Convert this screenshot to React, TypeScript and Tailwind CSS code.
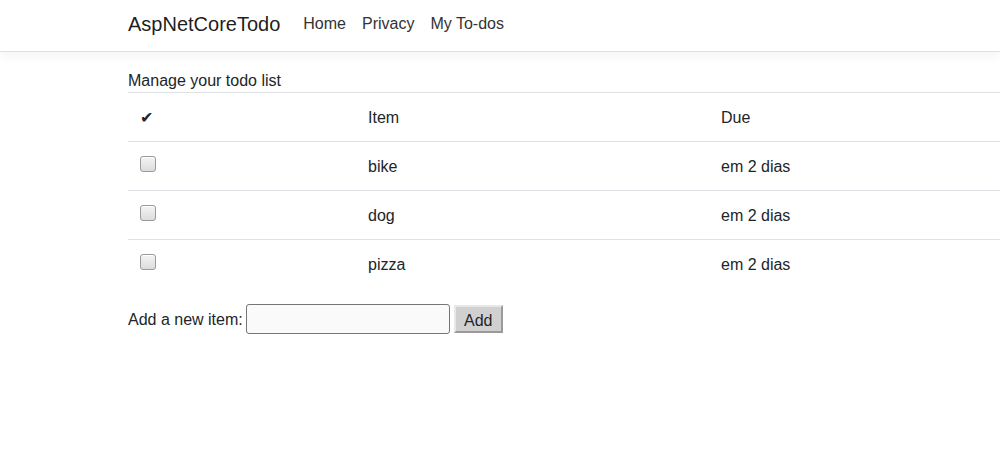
const todos = ["bike", "dog", "pizza"];

const Checkbox = () => (
  <span className="block w-4 h-4 rounded-[3px] border border-[#9a9a9a] bg-gradient-to-b from-[#f4f4f4] to-[#dcdcdc] shadow-[inset_0_1px_0_#fff]"></span>
);

export default function App() {
  return (
    <div className="min-h-[476px] bg-white text-[#212529] overflow-hidden" style={{ fontFamily: '"Liberation Sans", Arial, sans-serif' }}>
      <header className="h-[52px] border-b border-[#dee2e6] bg-white shadow-[0_4px_12px_rgba(0,0,0,0.05)] pl-[128px] pb-[4px] flex items-center">
        <span className="text-[20px] text-[rgba(0,0,0,0.9)] mr-[23px]">AspNetCoreTodo</span>
        <nav className="flex gap-[16px] text-[16px] text-[#333]">
          <span>Home</span>
          <span>Privacy</span>
          <span>My To-dos</span>
        </nav>
      </header>

      <main className="pl-[128px] pt-[18px]">
        <div className="w-[1110px]">
          <div className="text-[16px] leading-[22px]">Manage your todo list</div>
          <table className="w-full text-[16px] border-collapse">
            <thead>
              <tr className="border-t border-[#dee2e6]">
                <th className="w-[228px] text-left font-normal px-3 pt-[13px] pb-[11px] leading-6">✔</th>
                <th className="w-[353px] text-left font-normal px-3 pt-[13px] pb-[11px] leading-6">Item</th>
                <th className="text-left font-normal px-3 pt-[13px] pb-[11px] leading-6">Due</th>
              </tr>
            </thead>
            <tbody>
              {todos.map((t) => (
                <tr key={t} className="border-t border-[#dee2e6]">
                  <td className="p-3 leading-6 align-top">
                    <div className="h-6 pt-[2px]"><Checkbox /></div>
                  </td>
                  <td className="px-3 pt-[13px] pb-[11px] leading-6">{t}</td>
                  <td className="px-3 pt-[13px] pb-[11px] leading-6">em 2 dias</td>
                </tr>
              ))}
            </tbody>
          </table>

          <div className="mt-[16px] flex items-center text-[16px]">
            <span className="mr-[3px] pt-[2px]">Add a new item:</span>
            <input type="text" className="w-[204px] h-[30px] border border-[#767676] rounded-[3px] bg-[#fafafa] outline-none" />
            <button className="ml-[4px] h-[28px] w-[49px] pt-[2px] bg-[#d0d0d0] text-[#212529] border-2 border-t-[#e8e8e8] border-l-[#e8e8e8] border-r-[#9a9a9a] border-b-[#9a9a9a]">Add</button>
          </div>
        </div>
      </main>
    </div>
  );
}
